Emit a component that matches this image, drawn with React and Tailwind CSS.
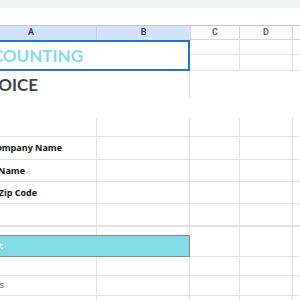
import React from 'react';

const line = 'border-[#e2e2e2]';

// text that ends at the right edge of a narrow box, the rest is scrolled off to the left
const Clipped = ({ width, className, children }) => (
  <div className={`flex justify-end overflow-hidden whitespace-nowrap ${className}`} style={{ width }}>
    <span>{children}</span>
  </div>
);

const GridRow = ({ h, bottom = 'border-b', cellA, cellB }) => (
  <div className={`flex ${h}`}>
    <div className={`w-[97px] border-r ${bottom} ${line} flex items-center overflow-hidden`}>{cellA}</div>
    <div className={`w-[93px] border-r ${bottom} ${line}`}>{cellB}</div>
    <div className={`w-[50px] border-r ${bottom} ${line}`} />
    <div className={`w-[53px] border-r ${bottom} ${line}`} />
    <div className={`flex-1 ${bottom} ${line}`} />
  </div>
);

const RightCols = ({ h }) => (
  <div className={`flex ${h}`}>
    <div className={`w-[50px] border-r border-b ${line}`} />
    <div className={`w-[53px] border-r border-b ${line}`} />
    <div className={`flex-1 border-b ${line}`} />
  </div>
);

const label = "text-[9px] font-bold text-[#111] font-['Open_Sans',sans-serif]";

export default function App() {
  return (
    <div className="w-[300px] h-[300px] overflow-hidden bg-white font-['Lato','Open_Sans',sans-serif]">
      <div className="h-[8px] bg-[#eef0f1]" />
      <div className="h-[17px] bg-white" />

      {/* column headers */}
      <div className="flex h-[15px] border-t border-[#c7c7c7] font-['Roboto',sans-serif] text-[9px] font-bold">
        <div className="w-[97px] bg-[#d3e3fd] border-r border-[#c2cde0] flex items-center pl-[28px] text-[#3c4043]">A</div>
        <div className="w-[93px] bg-[#d3e3fd] flex items-center justify-center text-[#3c4043]">B</div>
        <div className="w-[50px] bg-[#fbfbfb] border-l border-r border-b border-[#d6d6d6] flex items-center justify-center text-[#5f6368]">C</div>
        <div className="w-[53px] bg-[#fbfbfb] border-r border-b border-[#d6d6d6] flex items-center justify-center text-[#5f6368]">D</div>
        <div className="flex-1 bg-[#fbfbfb] border-b border-[#d6d6d6]" />
      </div>

      {/* rows 1-2, title cell selected */}
      <div className="flex">
        <div className="w-[190px] h-[31px] border-2 border-l-0 border-[#1a73e8] flex items-center overflow-hidden">
          <Clipped width="83px" className="text-[17px] font-bold text-[#7fdde6] leading-none">ACCOUNTING</Clipped>
        </div>
        <div className="flex-1 flex flex-col">
          <RightCols h="h-[15px]" />
          <RightCols h="h-[16px]" />
        </div>
      </div>

      {/* row 3 */}
      <div className="flex h-[27px]">
        <div className={`w-[190px] border-r ${line} flex items-center overflow-hidden`}>
          <Clipped width="38px" className="text-[17px] font-bold text-[#434343] leading-none">INVOICE</Clipped>
        </div>
        <div className="flex-1" />
      </div>
      {/* row 4 */}
      <div className="h-[20px]" />

      <GridRow h="h-[19px]" />
      <GridRow h="h-[23px]" cellA={<Clipped width="62px" className={label}>Your Company Name</Clipped>} />
      <GridRow h="h-[22px]" cellA={<Clipped width="25px" className={label}>Name</Clipped>} />
      <GridRow h="h-[22px]" cellA={<Clipped width="37px" className={label}>City, State Zip Code</Clipped>} />
      <GridRow h="h-[23px]" bottom="border-b-2" />
      <GridRow h="h-[8px]" bottom="border-b-0" />

      {/* section band */}
      <div className="flex h-[22px]">
        <div className="w-[190px] bg-[#80dde8] border border-l-0 border-[#7c8b8c] flex items-center overflow-hidden">
          <Clipped width="3px" className="text-[9px] font-bold text-white">BILL TO:</Clipped>
        </div>
        <div className={`w-[50px] border-r border-b ${line}`} />
        <div className={`w-[53px] border-r border-b ${line}`} />
        <div className={`flex-1 border-b ${line}`} />
      </div>

      <GridRow h="h-[19px]" />
      <GridRow
        h="h-[20px]"
        cellA={<Clipped width="4px" className="text-[9.5px] text-[#434343] font-['Open_Sans',sans-serif]">Items</Clipped>}
      />
      <GridRow h="h-[20px]" />
    </div>
  );
}
